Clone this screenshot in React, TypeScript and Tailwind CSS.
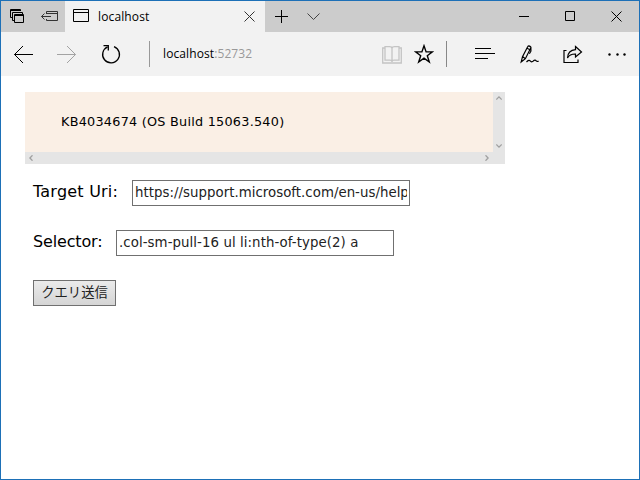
import type { ReactNode } from "react";

const UI_FONT = "font-['Open_Sans','Noto_Sans',sans-serif]";
const PAGE_FONT = "font-['DejaVu_Sans','Noto_Sans_CJK_JP',sans-serif]";

type IconProps = { w: number; h: number; className?: string; width?: number; children: ReactNode };

function Icon({ w, h, className = "", width = 1, children }: IconProps) {
  return (
    <svg
      width={w}
      height={h}
      viewBox={`0 0 ${w} ${h}`}
      fill="none"
      stroke="currentColor"
      strokeWidth={width}
      className={`shrink-0 ${className}`}
    >
      {children}
    </svg>
  );
}

function TitleBar() {
  return (
    <div className="flex h-[31px] items-start bg-[#cccccc] text-black">
      <Icon w={15} h={15} className="mt-2 ml-[9px]">
        <path d="M2 8.500H.5v-8h10V2M0 1.500h11M4 11.500H2.500v-8h10V5M4.500 5.500h9v8h-9zM4 6.500h10" />
      </Icon>
      <Icon w={17} h={11} className="mt-[10px] ml-4 text-[#333333]">
        <path d="M5.500 3V.5h11v9h-11V8M5 2.500h11M.5 5.500H10M3.500 2.500l-3 3 3 3" />
      </Icon>
      <div className="ml-[7px] flex h-full w-[200px] items-start bg-[#f2f2f2]">
        <Icon w={16} h={13} className="mt-2 ml-2">
          <path d="M.5.5h15v12H.5zM0 3.500h16" />
        </Icon>
        <span className={`mt-2 ml-[9px] w-[144px] text-[12px] leading-4 tracking-[0.13px] ${UI_FONT}`}>localhost</span>
        <Icon w={11} h={11} className="mt-[10px] ml-[2px] text-[#333333]">
          <path d="M.5.5l10 10M10.500.5l-10 10" />
        </Icon>
      </div>
      <Icon w={13} h={13} className="mt-[9px] ml-[10px]">
        <path d="M6.500 0v13M0 6.500h13" />
      </Icon>
      <Icon w={13} h={8} className="mt-3 ml-[19px] text-[#444444]">
        <path d="M.5.5l6 6 6-6" />
      </Icon>
      <Icon w={10} h={1} className="mt-[15px] ml-auto">
        <path d="M0 .5h10" />
      </Icon>
      <Icon w={10} h={10} className="mt-[10px] ml-9">
        <path d="M.5.5h9v9h-9z" />
      </Icon>
      <Icon w={11} h={11} className="mt-[10px] mr-[17px] ml-9">
        <path d="M.5.5l10 10M10.500.5l-10 10" />
      </Icon>
    </div>
  );
}

function Toolbar() {
  return (
    <div className="flex h-11 items-center bg-[#f2f2f2] text-black">
      <Icon w={20} h={18} className="ml-3">
        <path d="M20 9.500H1.500M10 1L1.500 9.500 10 18" />
      </Icon>
      <Icon w={20} h={18} className="ml-6 text-[#a3a3a3]">
        <path d="M0 9.500h18.500M10 1l8.500 8.500L10 18" />
      </Icon>
      <Icon w={20} h={20} className="ml-6" width={1.3}>
        <path d="M13 2.600A8.400 8.400 0 1 1 6.600 2.800" />
        <path d="M2.500 1.700h4.800v4.800" />
      </Icon>
      <div className="ml-7 h-[26px] w-px bg-[#999999]" />
      <span className={`ml-[13px] text-[12px] leading-4 tracking-[0.1px] ${UI_FONT}`}>
        localhost<span className="text-[#999999]">:52732</span>
      </span>
      <Icon w={20} h={19} className="ml-auto text-[#c4c4c4]" width={1.3}>
        <path d="M3 3H.7v15h18.600V3H17M10 3v14M3 1.700h4.500C9 1.700 10 2.200 10 3.500c0-1.300 1-1.800 2.500-1.800H17v13.500h-5c-1.200 0-2 .5-2 1.500 0-1-.8-1.500-2-1.500H3z" />
      </Icon>
      <Icon w={20} h={20} className="ml-3" width={1.4}>
        <path d="M10 1.800l2.100 6.100h6.300l-5.100 3.800 2 6.300-5.300-3.800L4.700 18l2-6.300-5.100-3.800h6.300z" />
      </Icon>
      <div className="ml-3 h-[26px] w-px bg-[#888888]" />
      <Icon w={20} h={12} className="ml-7">
        <path d="M0 .5h16M0 5.500h20M0 10.500h13" />
      </Icon>
      <Icon w={20} h={20} className="ml-[25px]" width={1.2}>
        <path d="M1.200 18l1.300-5.400L7.800 2.600c.7-1.400 3.500-.2 2.900 1.300L5.400 14.700zM7 4.200l3 1.500M9.200 2l1.700 1.200v4L9.400 9.700M2.500 12.600l2.900 2.100" />
        <path d="M6.500 18c1.700-1.900 3-2.200 4-.9 1 1.200 2 .7 3-.3 1.200-1.100 2.100-.6 2.700.1.800.9 1.600.7 2.300-.1" />
      </Icon>
      <Icon w={20} h={19} className="ml-[23px]" width={1.2}>
        <path d="M3.500 5.500H1v12h14v-3" />
        <path d="M12.500 1.500L18.500 7l-6 5V9C8.800 8.900 6 10.200 4.500 13 4.800 7.800 7.500 5 12.500 4.700z" />
      </Icon>
      <Icon w={18} h={3} className="mr-[13px] ml-[25px]">
        <g fill="currentColor" stroke="none">
          <circle cx="1.500" cy="1.500" r="1.200" />
          <circle cx="9.500" cy="1.500" r="1.200" />
          <circle cx="16.500" cy="1.500" r="1.200" />
        </g>
      </Icon>
    </div>
  );
}

function ResultPane() {
  return (
    <div className="ml-6 grid h-[72px] w-[480px] grid-cols-[468px_12px] grid-rows-[60px_12px] bg-[#e5e5e5] text-[#a0a0a0]">
      <div className="bg-[#faefe5] pt-[22px] pl-9 text-[12.800px] leading-4 tracking-[0.25px] whitespace-nowrap text-black">
        KB4034674 (OS Build 15063.540)
      </div>
      <div className="flex flex-col items-center justify-between py-1">
        <Icon w={6} h={4} width={1.3}><path d="M.3 3.500L3 .9l2.700 2.600" /></Icon>
        <Icon w={6} h={4} width={1.3}><path d="M.3.5L3 3.100 5.700.5" /></Icon>
      </div>
      <div className="flex items-center justify-between px-1">
        <Icon w={4} h={6} width={1.3}><path d="M3.500.3L.9 3l2.600 2.700" /></Icon>
        <Icon w={4} h={6} width={1.3}><path d="M.5.3L3.100 3 .5 5.700" /></Icon>
      </div>
    </div>
  );
}

export default function App() {
  return (
    <div className="h-[480px] w-[640px] overflow-hidden border border-[#1d70b7] bg-white">
      <TitleBar />
      <Toolbar />
      <main className={`pt-4 text-black ${PAGE_FONT}`}>
        <ResultPane />
        <form className="flex flex-col gap-6 pt-4 pl-8">
          <div className="flex h-[26px]">
            <label className="w-[99px] text-[16px] leading-[24px] tracking-[0.22px] whitespace-nowrap">Target Uri:</label>
            <div className="w-[278px] border border-[#707070] px-[2px]">
              <div className="overflow-hidden text-[13.330px] leading-[24px] tracking-[0.03px] whitespace-nowrap text-[#222222]">
                https://support.microsoft.com/en-us/help
              </div>
            </div>
          </div>
          <div className="flex h-[26px]">
            <label className="w-[83px] text-[16px] leading-[24px] tracking-[-0.15px] whitespace-nowrap">Selector:</label>
            <div className="w-[278px] border border-[#707070] px-[2px]">
              <div className="overflow-hidden text-[13.330px] leading-[24px] tracking-[0.07px] whitespace-nowrap text-[#222222]">
                .col-sm-pull-16 ul li:nth-of-type(2) a
              </div>
            </div>
          </div>
          <button
            type="button"
            className="h-[26px] w-[83px] border border-[#707070] bg-linear-to-b from-[#ebebeb] to-[#d5d5d5] pb-[2px] font-['Noto_Sans_CJK_JP',sans-serif] text-[13.330px] leading-[22px] whitespace-nowrap text-[#222222]"
          >
            クエリ送信
          </button>
        </form>
      </main>
    </div>
  );
}
